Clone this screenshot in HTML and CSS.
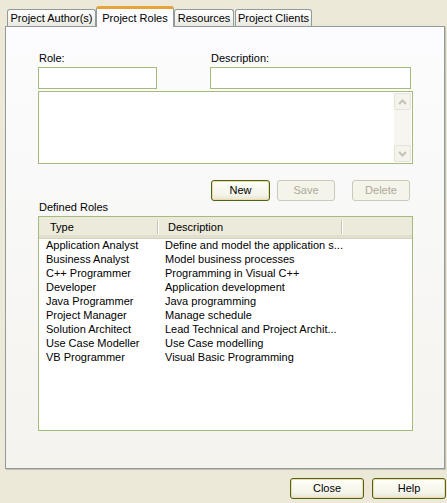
FILE: index.html
```html
<!DOCTYPE html>
<html>
<head>
<meta charset="utf-8">
<link rel="stylesheet" href="styles.css">
</head>
<body>
<div class="window">
  <div class="tabs">
    <div class="tab tab-authors">Project Author(s)</div>
    <div class="tab tab-active">Project Roles</div>
    <div class="tab tab-resources">Resources</div>
    <div class="tab tab-clients">Project Clients</div>
  </div>
  <div class="panel">
    <div class="fields">
      <div class="field field-role">
        <div class="label">Role:</div>
        <div class="input"></div>
      </div>
      <div class="field field-desc">
        <div class="label">Description:</div>
        <div class="input"></div>
      </div>
    </div>
    <div class="memo">
      <div class="memo-body"></div>
      <div class="scrollbar">
        <div class="sb-btn">
          <svg width="9" height="6" viewBox="0 0 9 6"><path d="M1 5 L4.5 1.5 L8 5" fill="none" stroke="#c6c4b6" stroke-width="2"/></svg>
        </div>
        <div class="sb-track"></div>
        <div class="sb-btn">
          <svg width="9" height="6" viewBox="0 0 9 6"><path d="M1 1 L4.5 4.5 L8 1" fill="none" stroke="#c6c4b6" stroke-width="2"/></svg>
        </div>
      </div>
    </div>
    <div class="actions">
      <div class="btn btn-default btn-new">New</div>
      <div class="btn btn-disabled btn-save">Save</div>
      <div class="btn btn-disabled btn-delete">Delete</div>
    </div>
    <div class="label label-roles">Defined Roles</div>
    <div class="list">
      <div class="list-header">
        <div class="hcol hcol-type">Type</div>
        <div class="hcol hcol-desc">Description</div>
        <div class="hcol hcol-rest"></div>
      </div>
      <div class="rows">
        <div class="row"><span class="c-type">Application Analyst</span><span class="c-desc">Define and model the application s...</span></div>
        <div class="row"><span class="c-type">Business Analyst</span><span class="c-desc">Model business processes</span></div>
        <div class="row"><span class="c-type">C++ Programmer</span><span class="c-desc">Programming in Visual C++</span></div>
        <div class="row"><span class="c-type">Developer</span><span class="c-desc">Application development</span></div>
        <div class="row"><span class="c-type">Java Programmer</span><span class="c-desc">Java programming</span></div>
        <div class="row"><span class="c-type">Project Manager</span><span class="c-desc">Manage schedule</span></div>
        <div class="row"><span class="c-type">Solution Architect</span><span class="c-desc">Lead Technical and Project Archit...</span></div>
        <div class="row"><span class="c-type">Use Case Modeller</span><span class="c-desc">Use Case modelling</span></div>
        <div class="row"><span class="c-type">VB Programmer</span><span class="c-desc">Visual Basic Programming</span></div>
      </div>
    </div>
  </div>
  <div class="footer">
    <div class="btn btn-default btn-footer">Close</div>
    <div class="btn btn-default btn-footer">Help</div>
  </div>
</div>
</body>
</html>
```

FILE: styles.css
```css
* { box-sizing: border-box; }
html, body { margin: 0; padding: 0; }
body {
  background: #ece9d8;
  font-family: "Liberation Sans", Arial, sans-serif;
  font-size: 11px;
  color: #000;
}
.window {
  width: 447px;
  height: 503px;
  overflow: hidden;
}
.tabs {
  display: flex;
  align-items: flex-end;
  height: 26px;
  padding-left: 7px;
}
.tab {
  height: 17px;
  line-height: 16px;
  text-align: center;
  border: 1px solid #919b9c;
  border-bottom: none;
  border-radius: 3px 3px 0 0;
  background: linear-gradient(#ffffff, #f3f3ef 60%, #e9e8e1);
  white-space: nowrap;
}
.tab-authors { width: 89px; }
.tab-active {
  width: 78px;
  height: 21px;
  line-height: 19px;
  margin-bottom: -1px;
  position: relative;
  z-index: 2;
  background: #fcfcfe;
  border-top: 3px solid #e8a23a;
}
.tab-resources { width: 60px; }
.tab-clients { width: 77px; margin-left: 1px; }
.panel {
  margin-left: 5px;
  width: 440px;
  height: 443px;
  border: 1px solid #919b9c;
  box-shadow: 1px 1px 0 #c3c0b0;
  background: linear-gradient(#fcfcfe, #f4f3ee);
  padding: 24px 0 0 32px;
}
.fields {
  display: flex;
  gap: 53px;
}
.label {
  height: 14px;
  line-height: 14px;
  margin-bottom: 2px;
  padding-left: 1px;
}
.input {
  height: 22px;
  background: #fff;
  border: 1px solid #a5ba7d;
}
.field-role .input { width: 119px; }
.field-desc .input { width: 201px; }
.memo {
  margin-top: 2px;
  width: 375px;
  height: 73px;
  border: 1px solid #a5ba7d;
  background: #fff;
  display: flex;
  padding: 1px 1px 1px 0;
}
.memo-body { flex: 1; }
.scrollbar {
  width: 18px;
  display: flex;
  flex-direction: column;
  background: #f6f5ef;
  border-left: 1px solid #fff;
}
.sb-btn {
  height: 17px;
  border: 1px solid #e6e4da;
  border-radius: 2px;
  background: #f4f3ec;
  display: flex;
  align-items: center;
  justify-content: center;
}
.sb-track { flex: 1; }
.actions {
  display: flex;
  margin-top: 16px;
  padding-left: 173px;
}
.btn {
  height: 21px;
  line-height: 19px;
  text-align: center;
  border-radius: 3px;
}
.btn-default {
  border: 1px solid #4a6418;
  background: linear-gradient(#fffff8, #f5f4ea 70%, #e6e4d6);
  box-shadow: inset 0 0 0 1px #f1d9a8;
}
.btn-disabled {
  border: 1px solid #cbc9bc;
  background: #f5f4ea;
  color: #aca899;
}
.btn-new { width: 59px; }
.btn-save { width: 58px; margin-left: 7px; }
.btn-delete { width: 58px; margin-left: 17px; }
.label-roles {
  margin-top: 1px;
  margin-bottom: 0;
  line-height: 10px;
}
.list {
  width: 375px;
  height: 215px;
  border: 1px solid #a5ba7d;
  background: #fff;
}
.list-header {
  display: flex;
  height: 21px;
  background: #ebeadb;
  border-bottom: 3px solid #e2dfcd;
  box-shadow: 0 1px 0 #d6d2c2;
}
.hcol { position: relative; }
.hcol-type { width: 119px; padding-left: 11px; }
.hcol-desc { width: 184px; padding-left: 10px; }
.hcol-rest { flex: 1; }
.hcol-type, .hcol-desc {
  border-right: 1px solid #c7c5b2;
  box-shadow: 1px 0 0 #fff;
  margin: 3px 0 1px;
  line-height: 14px;
}
.rows { padding-top: 0; }
.row {
  display: flex;
  height: 14px;
  line-height: 14px;
  white-space: nowrap;
}
.c-type { width: 119px; padding-left: 7px; }
.c-desc { padding-left: 7px; }
.footer {
  display: flex;
  justify-content: flex-end;
  gap: 8px;
  padding: 9px 1px 0 0;
}
.btn-footer { width: 74px; }
```
